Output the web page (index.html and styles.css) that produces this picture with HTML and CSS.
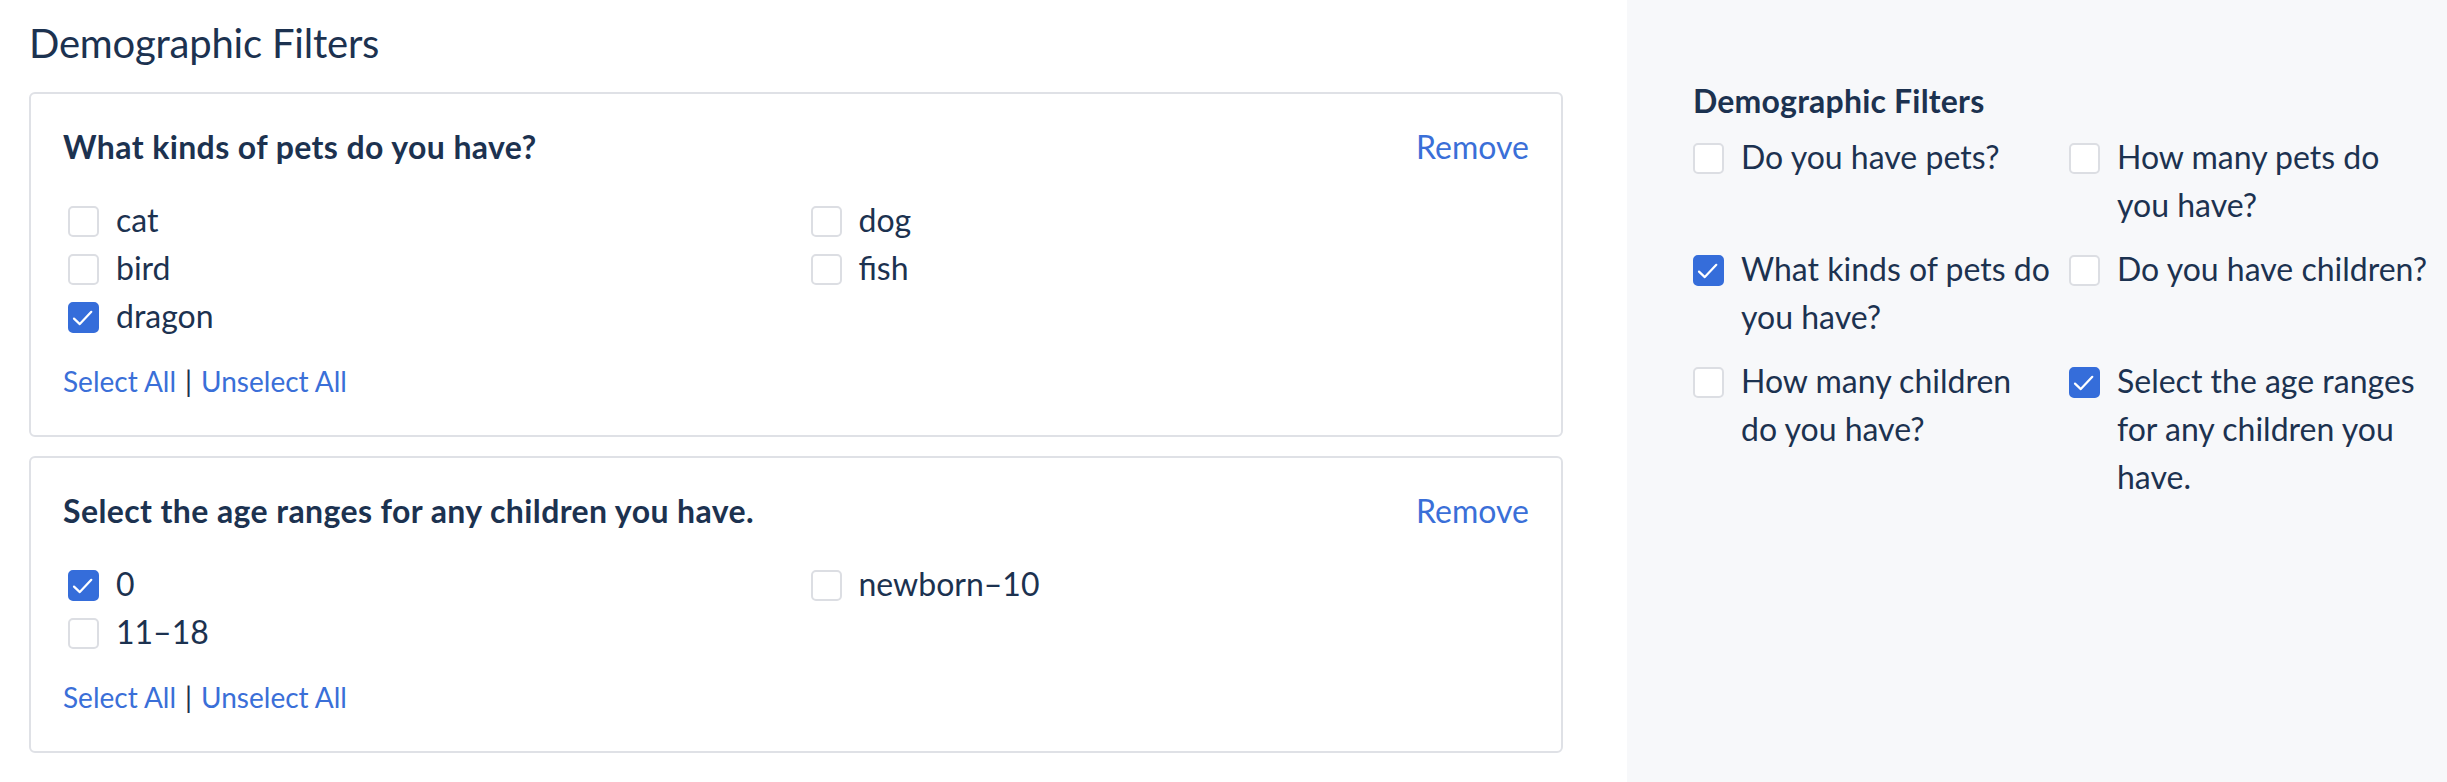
FILE: index.html
```html
<!doctype html>
<html lang="en">
<head>
  <meta charset="UTF-8">
  <title>Demographic Filters</title>
  <link rel="stylesheet" href="styles.css">
</head>
<body>
  <div class="page">
    <main class="filters">
      <h1 class="page-title">Demographic Filters</h1>

      <section class="card">
        <div class="card-head">
          <h2 class="card-title">What kinds of pets do you have?</h2>
          <a class="link" href="#">Remove</a>
        </div>
        <ul class="options">
          <li class="option"><span class="box"></span><span class="label">cat</span></li>
          <li class="option"><span class="box"></span><span class="label">dog</span></li>
          <li class="option"><span class="box"></span><span class="label">bird</span></li>
          <li class="option"><span class="box"></span><span class="label">fish</span></li>
          <li class="option"><span class="box checked"><svg viewBox="0 0 27 27"><path d="M4 14.6l5.8 5.5L21.3 7.8"/></svg></span><span class="label">dragon</span></li>
        </ul>
        <div class="bulk">
          <a class="link" href="#">Select All</a><span class="sep">|</span><a class="link" href="#">Unselect All</a>
        </div>
      </section>

      <section class="card">
        <div class="card-head">
          <h2 class="card-title">Select the age ranges for any children you have.</h2>
          <a class="link" href="#">Remove</a>
        </div>
        <ul class="options">
          <li class="option"><span class="box checked"><svg viewBox="0 0 27 27"><path d="M4 14.6l5.8 5.5L21.3 7.8"/></svg></span><span class="label">0</span></li>
          <li class="option"><span class="box"></span><span class="label">newborn–10</span></li>
          <li class="option"><span class="box"></span><span class="label">11–18</span></li>
        </ul>
        <div class="bulk">
          <a class="link" href="#">Select All</a><span class="sep">|</span><a class="link" href="#">Unselect All</a>
        </div>
      </section>
    </main>

    <aside class="sidebar">
      <h3 class="side-title">Demographic Filters</h3>
      <ul class="side-options">
        <li class="option"><span class="box"></span><span class="label">Do you have pets?</span></li>
        <li class="option"><span class="box"></span><span class="label">How many pets do you have?</span></li>
        <li class="option"><span class="box checked"><svg viewBox="0 0 27 27"><path d="M4 14.6l5.8 5.5L21.3 7.8"/></svg></span><span class="label">What kinds of pets do you have?</span></li>
        <li class="option"><span class="box"></span><span class="label">Do you have children?</span></li>
        <li class="option"><span class="box"></span><span class="label">How many children do you have?</span></li>
        <li class="option"><span class="box checked"><svg viewBox="0 0 27 27"><path d="M4 14.6l5.8 5.5L21.3 7.8"/></svg></span><span class="label">Select the age ranges for any children you have.</span></li>
      </ul>
    </aside>
  </div>
</body>
</html>
```

FILE: styles.css
```css
* {
    margin: 0;
    padding: 0;
    box-sizing: border-box;
}

body {
    font-family: Lato, "Liberation Sans", sans-serif;
    color: #1c3250;
    background-color: #fff;
    overflow: hidden;
}

ul {
    list-style: none;
}

.page {
    display: flex;
    height: 100vh;
}

/* left column */
.filters {
    flex: none;
    width: 1627px;
    background-color: #fff;
    padding: 19px 64px 0 29px;
}

.page-title {
    font-size: 40px;
    font-weight: 400;
    line-height: 48px;
    letter-spacing: -0.2px;
    margin-bottom: 25px;
}

.card {
    border: 2px solid #dfe1e6;
    border-radius: 6px;
    padding: 29px 32px 33px;
    margin-bottom: 19px;
}

.card-head {
    display: flex;
    justify-content: space-between;
    align-items: baseline;
    font-size: 32px;
    line-height: 48px;
}

.card-title {
    font-size: 32px;
    font-weight: 700;
    letter-spacing: 0.4px;
}

.link {
    color: #3a6fd8;
    text-decoration: none;
}

.options {
    display: grid;
    grid-template-columns: 1fr 1fr;
    column-gap: 24px;
    padding-left: 5px;
    margin-top: 25px;
}

.option {
    display: flex;
    align-items: flex-start;
    gap: 17px;
    font-size: 32px;
    line-height: 48px;
}

.box {
    flex: none;
    width: 31px;
    height: 31px;
    margin-top: 10px;
    border: 2px solid #dcdee3;
    border-radius: 5px;
    background-color: #fff;
}

.box.checked {
    background-color: #356dda;
    border-color: #356dda;
}

.box svg {
    display: block;
    width: 27px;
    height: 27px;
    fill: none;
    stroke: #fff;
    stroke-width: 2.2;
    stroke-linecap: round;
    stroke-linejoin: round;
}

.bulk {
    margin-top: 20px;
    font-size: 28px;
    line-height: 42px;
}

.sep {
    margin: 0 9px;
}

/* right column */
.sidebar {
    flex: 1;
    background-color: #f7f8fa;
    padding: 77px 19px 0 66px;
}

.side-title {
    font-size: 32px;
    font-weight: 700;
    line-height: 48px;
    letter-spacing: 0.2px;
}

.side-options {
    display: grid;
    grid-template-columns: 360px 362px;
    column-gap: 16px;
    row-gap: 16px;
    margin-top: 8px;
}
```
